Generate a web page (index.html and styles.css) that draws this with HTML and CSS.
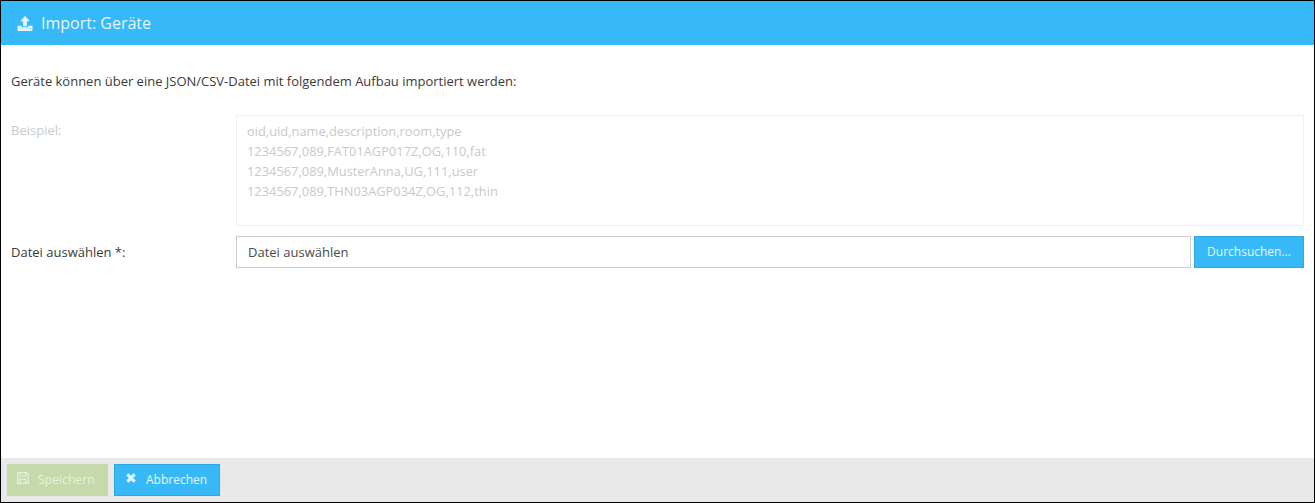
FILE: index.html
```html
<!DOCTYPE html>
<html lang="de">
<head>
<meta charset="utf-8">
<title>Import: Geräte</title>
<link rel="stylesheet" href="styles.css">
</head>
<body>
<div class="dialog">
  <header class="head">
    <svg class="head-icon" viewBox="1 1 14 14" aria-hidden="true"><path d="M8 1 12.500 6H9.800V10.500H6.200V6H3.500Z"/><path fill-rule="evenodd" d="M1 10H5V11.500H11V10H15V14.200Q15 15 14.200 15H1.800Q1 15 1 14.200ZM11.200 12.300H12V13H11.200ZM12.800 12.300H13.600V13H12.800Z"/></svg>
    <span class="head-title">Import: Geräte</span>
  </header>
  <main class="content">
    <p class="intro">Geräte können über eine JSON/CSV-Datei mit folgendem Aufbau importiert werden:</p>
    <div class="row row-example">
      <label class="label label-muted">Beispiel:</label>
      <div class="example">oid,uid,name,description,room,type<br>1234567,089,FAT01AGP017Z,OG,110,fat<br>1234567,089,MusterAnna,UG,111,user<br>1234567,089,THN03AGP034Z,OG,112,thin</div>
    </div>
    <div class="row row-file">
      <label class="label">Datei auswählen *:</label>
      <div class="file-input">Datei auswählen</div>
      <button class="btn btn-browse" type="button">Durchsuchen...</button>
    </div>
  </main>
  <footer class="foot">
    <button class="btn btn-save" type="button">
      <svg class="btn-icon" viewBox="0 0 12 12" aria-hidden="true"><path fill-rule="evenodd" d="M1 0H9.500L12 2.500V11Q12 12 11 12H1Q0 12 0 11V1Q0 0 1 0ZM1.200 1.200V10.800H2.500V6.500H9.500V10.800H10.800V3L9.500 1.700V4.500H2.500V1.200ZM3.700 1.200V3.500H8.300V1.200ZM3.700 7.700V10.800H8.300V7.700Z"/></svg>
      <span class="save-text">Speichern</span>
    </button>
    <button class="btn btn-cancel" type="button">
      <svg class="btn-icon" viewBox="0 0 14 14" aria-hidden="true"><path d="M4 1.500 7 4.500 10 1.500 12.500 4 9.500 7 12.500 10 10 12.500 7 9.500 4 12.500 1.500 10 4.500 7 1.500 4Z"/></svg>
      Abbrechen
    </button>
  </footer>
</div>
</body>
</html>
```
FILE: styles.css
```css
* { box-sizing: border-box; }
html, body { margin: 0; height: 100%; }
body {
  font-family: "Open Sans", "Liberation Sans", sans-serif;
  font-size: 13px;
  line-height: 20px;
  color: #3a3a3a;
  background: #fff;
}
.dialog {
  width: 1315px;
  height: 503px;
  border: 1px solid #000;
  display: flex;
  flex-direction: column;
  overflow: hidden;
}
.head {
  height: 44px;
  flex: none;
  background: #38b9f7;
  color: #e6f6fe;
  display: flex;
  align-items: center;
  padding: 0 16px;
  gap: 8px;
}
.head-icon { width: 16px; height: 15px; fill: #e6f6fe; }
.head-title { font-size: 16px; }
.content { flex: 1; padding: 26px 10px 0 10px; }
.intro { margin: 0 0 24px; height: 20px; font-size: 12.99px; }
.row { display: flex; }
.label { width: 225px; flex: none; }
.label-muted { color: #c9c9c9; padding-top: 5px; }
.example {
  flex: 1;
  height: 111px;
  padding: 5px 10px;
  border: 1px solid #f0f0f0;
  color: #c9c9c9;
  font-size: 12.87px;
}
.row-file { margin-top: 10px; height: 32px; align-items: center; }
.file-input {
  flex: 1;
  height: 32px;
  border: 1px solid #ccc;
  padding: 5px 11px;
  color: #4a4a4a;
}
.btn {
  font: inherit;
  font-size: 12px;
  border: 1px solid #2fa8e2;
  background: #38b9f7;
  color: #e6f6fe;
  display: inline-flex;
  align-items: center;
  padding: 0;
}
.btn-browse { width: 110px; height: 32px; margin-left: 3px; justify-content: center; }
.foot {
  height: 44px;
  flex: none;
  background: #e9e9e9;
  display: flex;
  align-items: center;
  padding: 0 6px;
  gap: 6px;
}
.foot .btn { height: 32px; gap: 9px; }
.btn-icon { width: 12px; height: 12px; fill: currentColor; margin-top: -4px; }
.btn-save {
  width: 101px;
  padding-left: 9px;
  background: #c5d9aa;
  border-color: #c5d9aa;
  color: #e9f0dd;
}
.save-text { font-size: 12.2px; }
.btn-cancel { width: 106px; padding-left: 10px; }
```
